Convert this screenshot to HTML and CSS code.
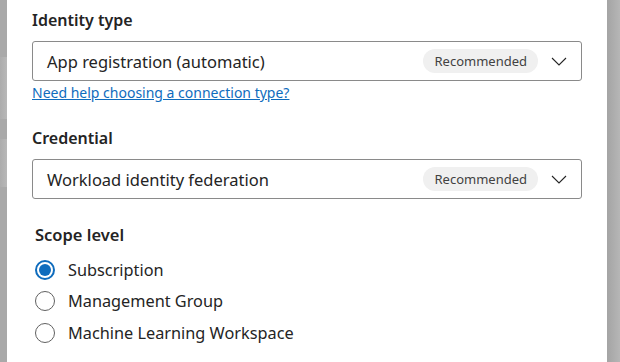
FILE: index.html
```html
<!DOCTYPE html>
<html lang="en">
<head>
  <meta charset="UTF-8" />
  <title>Service connection</title>
  <link rel="stylesheet" href="styles.css">
</head>
<body>
  <div class="frame">
    <!-- 뒤쪽 페이지 가장자리 -->
    <div class="backdrop-left">
      <span class="band band-a"></span>
      <span class="band band-b"></span>
      <span class="band band-c"></span>
      <span class="band band-d"></span>
      <span class="band band-e"></span>
    </div>

    <div class="panel">
      <!-- Identity type -->
      <div class="field first">
        <label class="field-label">Identity type</label>
        <div class="select">
          <span class="select-value">App registration (automatic)</span>
          <span class="pill">Recommended</span>
          <svg class="chevron" width="16" height="9" viewBox="0 0 16 9"><path d="M1 1 L8 8 L15 1" fill="none" stroke="#242424" stroke-width="1.1"/></svg>
        </div>
        <a class="help-link" href="#">Need help choosing a connection type?</a>
      </div>

      <!-- Credential -->
      <div class="field">
        <label class="field-label">Credential</label>
        <div class="select">
          <span class="select-value">Workload identity federation</span>
          <span class="pill">Recommended</span>
          <svg class="chevron" width="16" height="9" viewBox="0 0 16 9"><path d="M1 1 L8 8 L15 1" fill="none" stroke="#242424" stroke-width="1.1"/></svg>
        </div>
      </div>

      <!-- Scope level -->
      <div class="scope">
        <div class="scope-label">Scope level</div>
        <div class="radio-row"><span class="radio checked"></span>Subscription</div>
        <div class="radio-row"><span class="radio"></span>Management Group</div>
        <div class="radio-row"><span class="radio"></span>Machine Learning Workspace</div>
      </div>
    </div>

    <div class="backdrop-right"></div>
  </div>
</body>
</html>
```

FILE: styles.css
```css
/* ---------- 기본 ---------- */
body {
  margin: 0;
  font-family: "Noto Sans", "Open Sans", sans-serif;
  color: #242424;
  background: #fff;
}

.frame {
  display: flex;
  height: 362px;
  overflow: hidden;
}

/* ---------- 양쪽 배경 ---------- */
.backdrop-left {
  width: 7px;
  display: flex;
  flex-direction: column;
  box-shadow: 1px 0 2px rgba(0, 0, 0, 0.12);
}

.band { display: block; }
.band-a { height: 57px; background: #a9a9a9; }
.band-b { height: 62px; background: linear-gradient(to right, #acacac, #b8b8b8); }
.band-c { height: 20px; background: #a9a9a9; }
.band-d { height: 48px; background: linear-gradient(to right, #acacac, #b8b8b8); }
.band-e { flex: 1; background: #a9a9a9; }

.backdrop-right {
  width: 13px;
  background: linear-gradient(to right, #a4a4a4, #b6b6b6);
}

/* ---------- 패널 ---------- */
.panel {
  flex: 1;
  background: #fff;
  padding: 8px 0 0 25px;
}

.field {
  width: 550px;
  margin-bottom: 21px;
}

.field.first {
  margin-bottom: 23px;
}

.field-label {
  display: block;
  font-size: 16px;
  font-weight: 600;
  line-height: 24px;
  margin-bottom: 9px;
}

.select {
  display: flex;
  align-items: center;
  height: 38px;
  border: 1px solid #8a8a8a;
  border-radius: 3px;
  padding: 0 14px;
}

.select-value {
  flex: 1;
  font-size: 16.5px;
}

.pill {
  background: #f0f0f0;
  color: #424242;
  font-size: 13px;
  height: 24px;
  line-height: 24px;
  padding: 0 11px;
  border-radius: 12px;
  margin-right: 13px;
}

.chevron { display: block; }

.help-link {
  display: inline-block;
  font-size: 14px;
  line-height: 20px;
  color: #0f6cbd;
}

/* ---------- 라디오 ---------- */
.scope {
  padding-left: 3px;
  margin-top: 25px;
}

.scope-label {
  font-size: 16.5px;
  font-weight: 600;
  line-height: 22px;
  margin-bottom: 8px;
}

.radio-row {
  display: flex;
  align-items: center;
  gap: 13px;
  height: 31.5px;
  font-size: 16.3px;
}

.radio {
  width: 20px;
  height: 20px;
  border: 1px solid #616161;
  border-radius: 50%;
  box-sizing: border-box;
  position: relative;
}

.radio.checked {
  border: 2px solid #0f6cbd;
}

.radio.checked::after {
  content: '';
  position: absolute;
  top: 2px;
  left: 2px;
  width: 12px;
  height: 12px;
  border-radius: 50%;
  background: #0f6cbd;
}
```
